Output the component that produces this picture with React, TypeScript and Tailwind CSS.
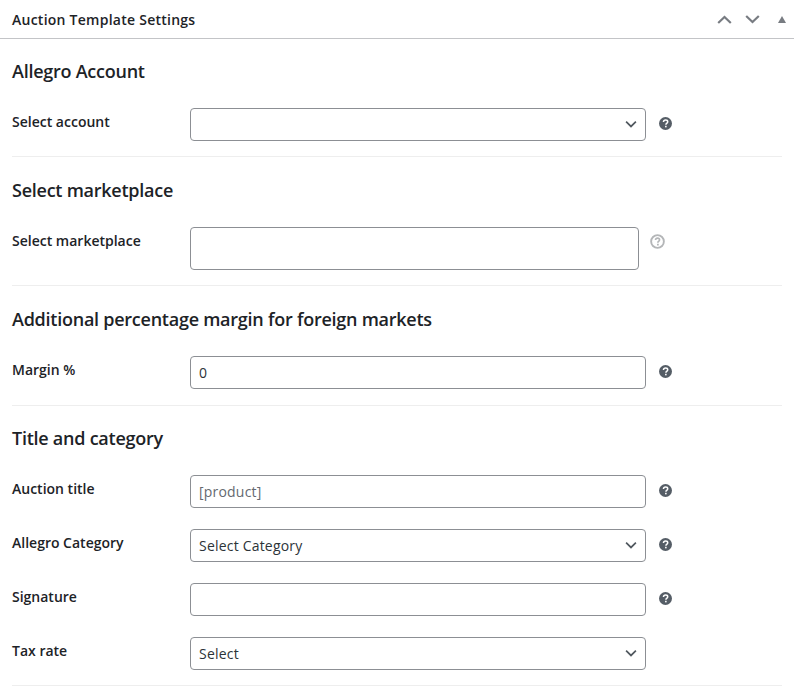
import { ReactNode } from "react";

const fontStack = "font-['Open_Sans','Noto_Sans',sans-serif]";

const Chevron = ({ up = false, className = "" }: { up?: boolean; className?: string }) => (
  <svg viewBox="0 0 16 10" className={className} fill="none" stroke="currentColor" strokeWidth="2.4">
    <path d={up ? "M1 9 8 2.2 15 9" : "M1 1 8 7.8 15 1"} />
  </svg>
);

const HelpIcon = () => (
  <svg viewBox="0 0 24 24" className="h-[13px] w-[13px] shrink-0">
    <circle cx="12" cy="12" r="12" fill="#555d66" />
    <path d="M8.2 9.2c.2-2.3 1.8-3.6 4-3.6 2.3 0 3.9 1.3 3.9 3.2 0 1.6-.9 2.3-2 3.1-.9.6-1.2 1-1.2 2v.4" fill="none" stroke="#fff" strokeWidth="2.8" />
    <rect x="11.2" y="16.2" width="2.9" height="2.9" fill="#fff" />
  </svg>
);

const HelpOutline = () => (
  <svg viewBox="0 0 24 24" className="h-[15px] w-[15px] shrink-0">
    <circle cx="12" cy="12" r="10.2" fill="none" stroke="#b4b6b8" strokeWidth="3" />
    <path d="M8.8 9.6c.2-1.9 1.5-3 3.3-3 1.9 0 3.2 1.1 3.2 2.7 0 1.3-.8 1.9-1.7 2.6-.8.5-1 .9-1 1.7v.3" fill="none" stroke="#b4b6b8" strokeWidth="2.6" />
    <rect x="11.2" y="15.6" width="2.8" height="2.8" fill="#b4b6b8" />
  </svg>
);

const Row = ({ label, children, help = true }: { label: string; children: ReactNode; help?: boolean }) => (
  <div className="flex items-start">
    <label className="w-[178px] shrink-0 pt-[3px] text-[14px] leading-[22px] font-semibold text-[#1d2327]">{label}</label>
    {children}
    {help && (
      <div className="ml-[13px] flex h-[30px] items-center">
        <HelpIcon />
      </div>
    )}
  </div>
);

const SelectBox = ({ value }: { value?: string }) => (
  <div className="relative h-[33px] w-[456px] rounded border border-[#8c8f94] bg-white">
    <span className="block pl-2 text-[14px] leading-[31px] tracking-[0.2px] text-[#2c3338]">{value}</span>
    <Chevron className="absolute top-[12px] right-[8px] h-[7px] w-[12px] text-[#50575e]" />
  </div>
);

const TextBox = ({ value, placeholder }: { value?: string; placeholder?: string }) => (
  <input
    readOnly
    value={value ?? ""}
    placeholder={placeholder}
    className="h-[33px] w-[456px] rounded border border-[#8c8f94] bg-white px-2 pb-[1px] text-[14px] tracking-[0.2px] text-[#2c3338] outline-none placeholder:text-[#646970]"
  />
);

const Section = ({ title, children, className = "" }: { title: string; children: ReactNode; className?: string }) => (
  <div className={`border-b border-[#eeeeee] ${className}`}>
    <h3 className="mb-[25px] text-[18px] leading-[24px] font-semibold tracking-[-0.25px] text-[#1d2327]">{title}</h3>
    {children}
  </div>
);

export default function App() {
  return (
    <div className={`h-[699px] w-[794px] overflow-hidden bg-white ${fontStack}`}>
      <div className="flex h-[39px] items-center justify-between border-b border-[#c3c4c7] pr-[8px] pl-3">
        <h2 className="text-[14px] font-semibold tracking-[0.25px] text-[#1d2327]">Auction Template Settings</h2>
        <div className="flex items-center text-[#787c82]">
          <Chevron up className="h-[9px] w-[15px]" />
          <Chevron className="ml-[13px] h-[9px] w-[15px]" />
          <span className="ml-[18px] h-0 w-0 border-x-[4.5px] border-b-[7px] border-x-transparent border-b-[#787c82]" />
        </div>
      </div>

      <div className="mx-3">
        <Section title="Allegro Account" className="pt-5 pb-[15px]">
          <Row label="Select account">
            <SelectBox />
          </Row>
        </Section>

        <Section title="Select marketplace" className="pt-[21px] pb-[15px]">
          <div className="flex items-start">
            <label className="w-[178px] shrink-0 pt-[3px] text-[14px] leading-[22px] font-semibold text-[#1d2327]">Select marketplace</label>
            <div className="h-[43px] w-[449px] rounded border border-[#8c8f94] bg-white" />
            <div className="ml-[11px] pt-[7px]">
              <HelpOutline />
            </div>
          </div>
        </Section>

        <Section title="Additional percentage margin for foreign markets" className="pt-[21px] pb-[16px]">
          <Row label="Margin %">
            <TextBox value="0" />
          </Row>
        </Section>

        <Section title="Title and category" className="pt-5 pb-[15px]">
          <div className="flex flex-col gap-[21px]">
            <Row label="Auction title">
              <TextBox placeholder="[product]" />
            </Row>
            <Row label="Allegro Category">
              <SelectBox value="Select Category" />
            </Row>
            <Row label="Signature">
              <TextBox />
            </Row>
            <Row label="Tax rate" help={false}>
              <SelectBox value="Select" />
            </Row>
          </div>
        </Section>
      </div>
    </div>
  );
}
